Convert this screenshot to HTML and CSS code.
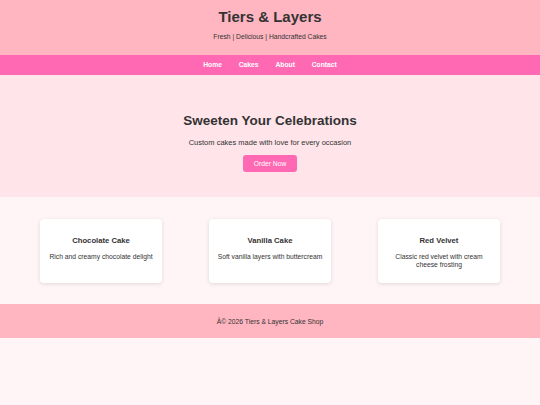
FILE: index.html
```html
<!DOCTYPE html>
<html lang="en">
<head>
<meta charset="utf-8">
<title>Tiers &amp; Layers</title>
<link rel="stylesheet" href="styles.css">
</head>
<body>
<header class="site-header">
  <h1 class="brand">Tiers &amp; Layers</h1>
  <p class="tagline">Fresh | Delicious | Handcrafted Cakes</p>
</header>
<nav class="main-nav">
  <a href="#">Home</a>
  <a href="#">Cakes</a>
  <a href="#">About</a>
  <a href="#">Contact</a>
</nav>
<section class="hero">
  <h2 class="hero-title">Sweeten Your Celebrations</h2>
  <p class="hero-text">Custom cakes made with love for every occasion</p>
  <a class="btn" href="#">Order Now</a>
</section>
<section class="cakes">
  <div class="card">
    <h3 class="card-title">Chocolate Cake</h3>
    <p class="card-text">Rich and creamy chocolate delight</p>
  </div>
  <div class="card">
    <h3 class="card-title">Vanilla Cake</h3>
    <p class="card-text">Soft vanilla layers with buttercream</p>
  </div>
  <div class="card">
    <h3 class="card-title">Red Velvet</h3>
    <p class="card-text">Classic red velvet with cream cheese frosting</p>
  </div>
</section>
<footer class="site-footer">
  <p>Â© 2026 Tiers &amp; Layers Cake Shop</p>
</footer>
</body>
</html>
```
FILE: styles.css
```css
* { box-sizing: border-box; }
html, body {
  margin: 0;
  padding: 0;
}
body {
  background: #fff5f7;
  font-family: "Liberation Sans", Arial, sans-serif;
  color: #333;
}
.site-header {
  background: #ffb6c1;
  text-align: center;
  padding: 7px 0 13px;
}
.brand {
  margin: 0;
  font-size: 15px;
  line-height: 20px;
  font-weight: bold;
}
.tagline {
  margin: 5px 0 0;
  font-size: 6.75px;
  line-height: 10px;
}
.main-nav {
  background: #ff69b4;
  height: 20px;
  display: flex;
  justify-content: center;
  align-items: center;
  gap: 16.8px;
}
.main-nav a {
  color: #fff;
  text-decoration: none;
  font-weight: bold;
  font-size: 6.75px;
  line-height: 10px;
}
.hero {
  background: #ffe4e9;
  text-align: center;
  padding: 36px 0 25px;
  display: flex;
  flex-direction: column;
  align-items: center;
}
.hero-title {
  margin: 0;
  font-size: 13.5px;
  line-height: 20px;
}
.hero-text {
  margin: 6px 0 0;
  font-size: 7.5px;
  line-height: 12px;
}
.btn {
  margin-top: 6px;
  display: flex;
  align-items: center;
  justify-content: center;
  width: 54px;
  height: 17px;
  background: #ff69b4;
  color: #fff;
  border-radius: 3px;
  font-size: 6.75px;
  text-decoration: none;
}
.cakes {
  display: flex;
  gap: 47px;
  padding: 22px 40px 21px;
}
.card {
  flex: 1;
  background: #fff;
  border-radius: 4px;
  box-shadow: 0 1px 4px rgba(0,0,0,0.12);
  text-align: center;
  padding: 16px 7px 14px;
}
.card-title {
  margin: 0;
  font-size: 7.7px;
  line-height: 11px;
  font-weight: bold;
}
.card-text {
  margin: 7px 0 0;
  font-size: 6.75px;
  line-height: 8px;
}
.site-footer {
  background: #ffb6c1;
  height: 34px;
  display: flex;
  align-items: center;
  justify-content: center;
}
.site-footer p {
  margin: 0;
  font-size: 6.75px;
  line-height: 9px;
}
```
